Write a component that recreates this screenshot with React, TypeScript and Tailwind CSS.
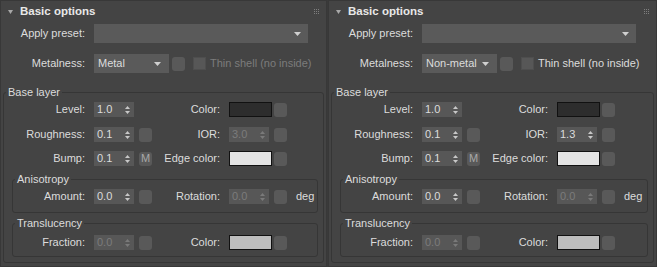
import React from 'react';

type PanelProps = {
  metalness: string;
  thinShellEnabled: boolean;
  ior: string;
  iorEnabled: boolean;
};

const Arrows: React.FC<{ disabled?: boolean }> = ({ disabled }) => (
  <svg width="5" height="8" viewBox="0 0 5 8" className={disabled ? 'text-[#7a7a7a]' : 'text-[#c8c8c8]'}>
    <path d="M2.5 0 L5 3 L0 3 Z" fill="currentColor" />
    <path d="M0 5 L5 5 L2.5 8 Z" fill="currentColor" />
  </svg>
);

const DownArrow: React.FC = () => (
  <svg width="7" height="4" viewBox="0 0 7 4" className="text-[#d0d0d0]">
    <path d="M0 0 L7 0 L3.5 4 Z" fill="currentColor" />
  </svg>
);

const Spinner: React.FC<{ value: string; disabled?: boolean; className?: string }> = ({ value, disabled, className }) => (
  <div className={`flex h-[15px] w-[40px] items-center justify-between bg-[#575757] pl-[3px] pr-[4px] ${className ?? ''}`}>
    <span className={disabled ? 'text-[#7c7c7c]' : 'text-[#dcdcdc]'}>{value}</span>
    <Arrows disabled={disabled} />
  </div>
);

const SmallBtn: React.FC<{ children?: React.ReactNode; className?: string }> = ({ children, className }) => (
  <div className={`flex h-[14px] w-[13px] items-center justify-center rounded-[3px] bg-[#595959] text-[11px] leading-none text-[#a8a8a8] ${className ?? ''}`}>
    {children}
  </div>
);

const Swatch: React.FC<{ color: string }> = ({ color }) => (
  <div className={`h-[15px] w-[43px] border border-[#111111] ${color}`} />
);

const Grip: React.FC = () => (
  <svg width="6" height="6" viewBox="0 0 6 6" className="text-[#7e7e7e]">
    {[0, 2, 4].map(y => [0, 2, 4].map(x => <rect key={`${x}-${y}`} x={x} y={y} width="1" height="1" fill="currentColor" />))}
  </svg>
);

const Panel: React.FC<PanelProps & { className?: string }> = ({ metalness, thinShellEnabled, ior, iorEnabled, className }) => (
  <div className={`flex h-[267px] flex-col border border-[#383838] bg-[#444444] ${className ?? ''}`}>
    {/* Header */}
    <div className="flex h-[21px] items-center pr-[6px]">
      <svg width="5" height="4" viewBox="0 0 5 4" className="ml-[7px] text-[#a8a8a8]">
        <path d="M0 0 L5 0 L2.5 4 Z" fill="currentColor" />
      </svg>
      <span className="ml-[7px] text-[11.5px] font-bold text-[#e8e8e8]">Basic options</span>
      <div className="ml-auto">
        <Grip />
      </div>
    </div>

    {/* Apply preset */}
    <div className="mt-[2px] flex items-center">
      <span className="w-[84px] text-right">Apply preset:</span>
      <div className="ml-[9px] flex h-[19px] w-[214px] items-center justify-end bg-[#5a5a5a] pr-[7px]">
        <DownArrow />
      </div>
    </div>

    {/* Metalness */}
    <div className="mt-[11px] flex items-center">
      <span className="w-[84px] text-right">Metalness:</span>
      <div className="ml-[9px] flex h-[19px] w-[75px] items-center justify-between bg-[#5a5a5a] pl-[4px] pr-[8px]">
        <span>{metalness}</span>
        <DownArrow />
      </div>
      <SmallBtn className="ml-[3px]" />
      <div className="ml-[8px] h-[13px] w-[13px] border border-[#4e4e4e] bg-[#575757]" />
      <span className={`ml-[4px] ${thinShellEnabled ? 'text-[#dcdcdc]' : 'text-[#7c7c7c]'}`}>Thin shell (no inside)</span>
    </div>

    {/* Base layer */}
    <fieldset className="mx-[2px] mt-[13px] rounded-[3px] border border-[#363636] px-0 pb-[5px] pt-[3px]">
      <legend className="ml-[2px] px-[2px] leading-[13px]">Base layer</legend>

      <div className="flex h-[15px] items-center">
        <span className="w-[81px] text-right">Level:</span>
        <Spinner value="1.0" className="ml-[9px]" />
        <div className="w-[18px]" />
        <span className="w-[68px] text-right">Color:</span>
        <div className="ml-[9px]"><Swatch color="bg-[#2d2d2d]" /></div>
        <SmallBtn className="ml-[2px]" />
      </div>

      <div className="mt-[10px] flex h-[15px] items-center">
        <span className="w-[81px] text-right">Roughness:</span>
        <Spinner value="0.1" className="ml-[9px]" />
        <SmallBtn className="ml-[5px]" />
        <span className="w-[68px] text-right">IOR:</span>
        <Spinner value={ior} disabled={!iorEnabled} className="ml-[9px]" />
        <SmallBtn className="ml-[5px]" />
      </div>

      <div className="mt-[9px] flex h-[15px] items-center">
        <span className="w-[81px] text-right">Bump:</span>
        <Spinner value="0.1" className="ml-[9px]" />
        <SmallBtn className="ml-[5px]">M</SmallBtn>
        <span className="w-[68px] text-right">Edge color:</span>
        <div className="ml-[9px]"><Swatch color="bg-[#e4e4e4]" /></div>
        <SmallBtn className="ml-[2px]" />
      </div>

      {/* Anisotropy */}
      <fieldset className="ml-[8px] mr-[5px] mt-[7px] rounded-[3px] border border-[#363636] px-0 pb-[8px] pt-[3px]">
        <legend className="ml-[2px] px-[2px] leading-[13px]">Anisotropy</legend>
        <div className="flex h-[15px] items-center">
          <span className="w-[72px] text-right">Amount:</span>
          <Spinner value="0.0" className="ml-[9px]" />
          <SmallBtn className="ml-[5px]" />
          <span className="w-[68px] text-right">Rotation:</span>
          <Spinner value="0.0" disabled className="ml-[9px]" />
          <SmallBtn className="ml-[5px]" />
          <span className="ml-[9px]">deg</span>
        </div>
      </fieldset>

      {/* Translucency */}
      <fieldset className="ml-[8px] mr-[5px] mt-[4px] rounded-[3px] border border-[#363636] px-0 pb-[6px] pt-[5px]">
        <legend className="ml-[2px] px-[2px] leading-[13px]">Translucency</legend>
        <div className="flex h-[15px] items-center">
          <span className="w-[72px] text-right">Fraction:</span>
          <Spinner value="0.0" disabled className="ml-[9px]" />
          <SmallBtn className="ml-[5px]" />
          <span className="w-[68px] text-right">Color:</span>
          <div className="ml-[9px]"><Swatch color="bg-[#bdbdbd]" /></div>
          <SmallBtn className="ml-[2px]" />
        </div>
      </fieldset>
    </fieldset>
  </div>
);

const App: React.FC = () => {
  return (
    <div className="flex h-[267px] w-[657px] gap-[1px] overflow-hidden bg-[#3a3a3a] font-['Liberation_Sans',Arial,sans-serif] text-[11px] leading-[13px] text-[#dcdcdc]">
      <Panel className="w-[327px]" metalness="Metal" thinShellEnabled={false} ior="3.0" iorEnabled={false} />
      <Panel className="flex-1" metalness="Non-metal" thinShellEnabled ior="1.3" iorEnabled />
    </div>
  );
};

export default App;
